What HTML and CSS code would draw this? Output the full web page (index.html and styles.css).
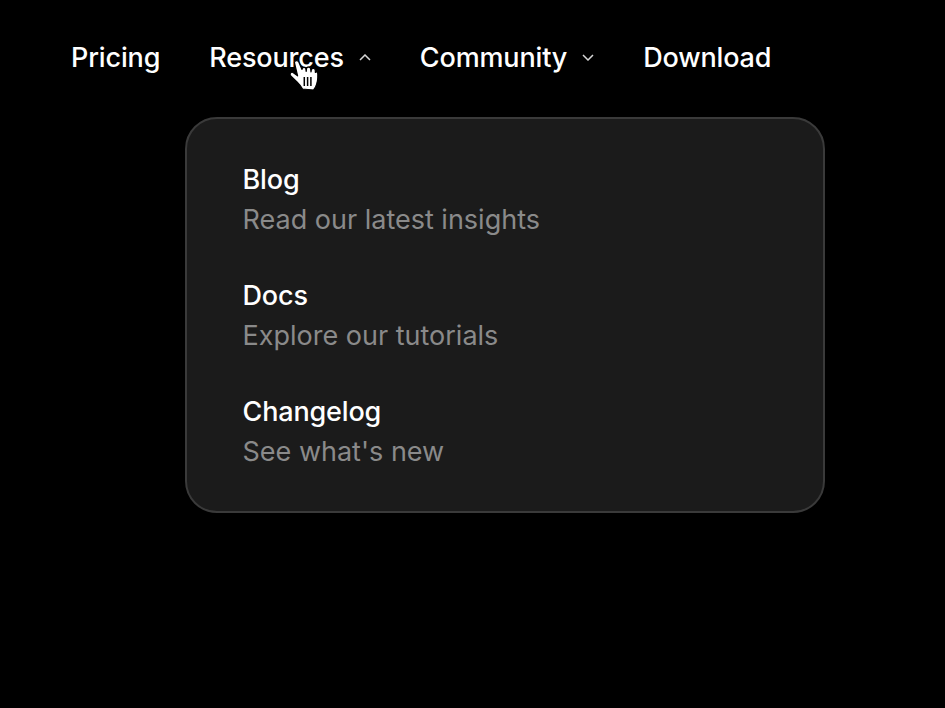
FILE: index.html
```html
<!DOCTYPE html>
<html lang="en">
<head>
<meta charset="utf-8">
<title>Navigation</title>
<link rel="stylesheet" href="styles.css">
</head>
<body>
<nav class="nav">
  <a class="nav-item">Pricing</a>
  <a class="nav-item">Resources
    <svg class="chevron" viewBox="0 0 12 7" width="12" height="7"><path d="M1 6 L6 1 L11 6" /></svg>
  </a>
  <a class="nav-item">Community
    <svg class="chevron" viewBox="0 0 12 7" width="12" height="7"><path d="M1 1 L6 6 L11 1" /></svg>
  </a>
  <a class="nav-item">Download</a>
</nav>
<section class="panel">
  <a class="entry"><span class="entry-title">Blog</span><span class="entry-desc">Read our latest insights</span></a>
  <a class="entry"><span class="entry-title">Docs</span><span class="entry-desc">Explore our tutorials</span></a>
  <a class="entry"><span class="entry-title">Changelog</span><span class="entry-desc">See what's new</span></a>
</section>
<svg class="cursor" viewBox="0 0 32 34" width="32" height="34">
  <path class="cursor-hand" d="M6.4 4.5 C6.6 2.2 9.8 1.8 10.8 4 L14 11.5 C14.2 9.2 17 8.8 17.8 10.6 L18.2 13.5 L18.6 10.2 C19.4 8.6 22 8.8 22.6 10.6 L23 14 L23.4 11.4 C24.2 9.8 26.6 10 27.2 11.8 L27.4 14.5 C28 13.4 29.6 13.8 29.8 15.6 C30 20 29 26 27.5 29 L25.5 32 L14.5 31 C13 28 11 26 9 24 L2.8 18 C1.2 16 2.6 13.6 5 14.4 L9.6 17.8 Z" />
  <path class="cursor-line" d="M16.3 19 V28 M19.6 19 V28 M22.9 19 V28" />
</svg>
</body>
</html>
```
FILE: styles.css
```css
* { box-sizing: border-box; }
html, body { margin: 0; padding: 0; }
body {
  position: relative;
  width: 945px;
  height: 708px;
  overflow: hidden;
  background: #000;
  color: #fff;
  font-family: Inter, "Liberation Sans", sans-serif;
}
.nav {
  display: flex;
  align-items: center;
  height: 40px;
  margin-top: 38px;
  padding-left: 71px;
  gap: 49px;
  font-size: 27px;
  font-weight: 500;
  line-height: 40px;
  letter-spacing: -0.15px;
}
.nav-item {
  display: flex;
  align-items: center;
  gap: 15px;
  white-space: nowrap;
}
.chevron {
  display: block;
  margin-bottom: 2px;
}
.chevron path {
  fill: none;
  stroke: #d6d6d6;
  stroke-width: 1.5;
}
.panel {
  display: flex;
  flex-direction: column;
  gap: 36px;
  width: 640px;
  height: 396px;
  margin: 39px 0 0 185px;
  padding: 41px 55.5px;
  background: #1b1b1b;
  border: 2px solid #3a3a3a;
  border-radius: 32px;
}
.entry { display: flex; flex-direction: column; }
.entry-title {
  font-size: 27px;
  font-weight: 500;
  line-height: 40px;
  letter-spacing: -0.15px;
}
.entry-desc {
  font-size: 27px;
  font-weight: 400;
  line-height: 40px;
  color: #8a8a8a;
}
.cursor {
  position: absolute;
  left: 288px;
  top: 58px;
}
.cursor-hand {
  fill: #fff;
  stroke: #000;
  stroke-width: 1.2;
  stroke-linejoin: round;
}
.cursor-line {
  fill: none;
  stroke: #000;
  stroke-width: 1.5;
}
```
